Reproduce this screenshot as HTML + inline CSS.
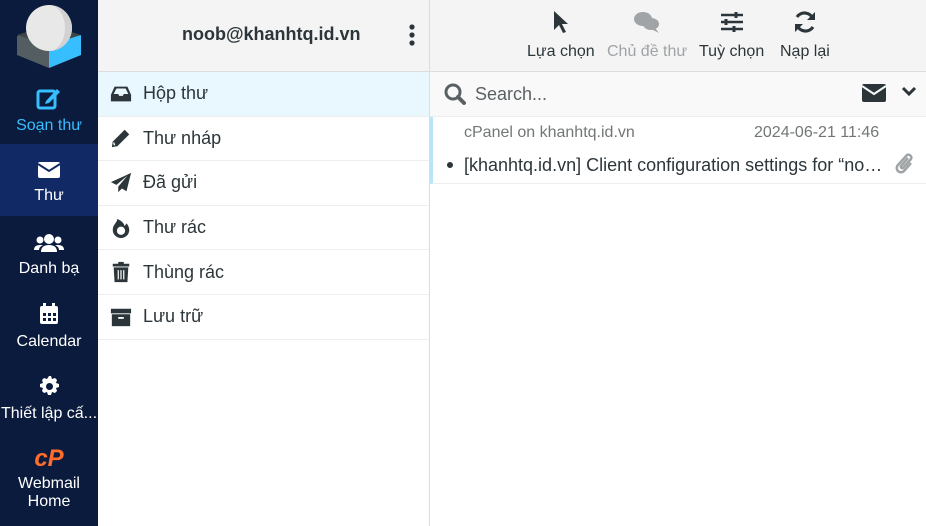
<!DOCTYPE html>
<html><head><meta charset="utf-8"><style>
*{margin:0;padding:0;box-sizing:border-box}
body{width:926px;height:526px;overflow:hidden;font-family:"Liberation Sans",sans-serif;background:#fff;position:relative;color:#2c363a}
#side{position:absolute;left:0;top:0;width:98px;height:526px;background:#0b1b3d}
.nav{position:absolute;left:0;width:98px;text-align:center;color:#fff;font-size:16px}
.nav svg{display:block;margin:0 auto 7px}
#fold{position:absolute;left:98px;top:0;width:332px;height:526px;border-right:1px solid #ddd}
.hd{height:72px;background:#f4f4f4;border-bottom:1px solid #ddd;position:relative}
.fi{height:44.6px;border-bottom:1px solid #eee;display:flex;align-items:center;font-size:18px;padding-left:12px}
.fi svg{width:22px;height:22px;margin-right:11px}
#main{position:absolute;left:430px;top:0;width:496px;height:526px}
.tb{position:absolute;top:10px;text-align:center;font-size:16px}
.tb svg{display:block;margin:0 auto 9px}
</style></head><body>
<div id="side">
 <svg style="position:absolute;left:16px;top:4px" width="66" height="66" viewBox="0 0 66 66">
  <polygon points="1,32 33,21 65,32 65,51 33,64 1,51" fill="#545d61"/>
  <polygon points="33,37 65,31 65,51 33,64" fill="#37beff"/>
  <polygon points="1,31 33,21 65,31 33,41" fill="#3d4548"/>
  <circle cx="33" cy="24" r="23" fill="#e8e8e8"/>
  <path d="M33,1 A23,23 0 0 1 33,47 A16,23 0 0 0 33,1" fill="#d2d2d2"/>
 </svg>
 <div class="nav" style="top:86px;color:#37beff"><svg width="26" height="24" viewBox="0 0 26 24"><rect x="2" y="5" width="17" height="17" rx="2" fill="none" stroke="#37beff" stroke-width="3"/><path d="M10 15 L21 3 L24 6 L13 17 L9 18Z" fill="#37beff"/></svg>Soạn thư</div>
 <div style="position:absolute;top:144px;left:0;width:98px;height:72px;background:#112a66"></div>
 <div class="nav" style="top:160px"><svg width="24" height="20" viewBox="0 0 24 20"><rect x="1" y="2" width="22" height="16" rx="2" fill="#fff"/><path d="M1 4 L12 11 L23 4" fill="none" stroke="#112a66" stroke-width="2"/></svg>Thư</div>
 <div class="nav" style="top:233px"><svg width="30" height="20" viewBox="0 0 30 20"><circle cx="15" cy="6" r="5" fill="#fff"/><circle cx="6" cy="7" r="3.5" fill="#fff"/><circle cx="24" cy="7" r="3.5" fill="#fff"/><path d="M7 19 Q7 12 15 12 Q23 12 23 19Z M0 17 Q0 12 6 12 L9 12 Q5 14 5 17Z M30 17 Q30 12 24 12 L21 12 Q25 14 25 17Z" fill="#fff"/></svg>Danh bạ</div>
 <div class="nav" style="top:302px"><svg width="22" height="24" viewBox="0 0 22 24"><rect x="2" y="4" width="18" height="18" rx="2" fill="#fff"/><rect x="5" y="1" width="3" height="5" fill="#fff"/><rect x="14" y="1" width="3" height="5" fill="#fff"/><g fill="#0b1b3d"><rect x="5" y="11" width="3" height="3"/><rect x="10" y="11" width="3" height="3"/><rect x="15" y="11" width="3" height="3"/><rect x="5" y="16" width="3" height="3"/><rect x="10" y="16" width="3" height="3"/><rect x="15" y="16" width="3" height="3"/></g></svg>Calendar</div>
 <div class="nav" style="top:374px;white-space:nowrap;font-size:16px"><svg width="24" height="24" viewBox="0 0 24 24"><path d="M12 2l2 0 1 3 3-1 2 2-1 3 3 1v3l-3 1 1 3-2 2-3-1-1 3h-3l-1-3-3 1-2-2 1-3-3-1v-3l3-1-1-3 2-2 3 1z" fill="#fff"/><circle cx="12.5" cy="12.5" r="3.5" fill="#0b1b3d"/></svg>Thiết lập cấ...</div>
 <div class="nav" style="top:446px;line-height:18px"><div style="color:#ff6c2c;font-weight:bold;font-style:italic;font-size:24px;line-height:26px;margin-bottom:3px">cP</div>Webmail<br>Home</div>
</div>
<div id="fold">
 <div class="hd"><div style="position:absolute;left:84px;top:24px;font-size:18px;font-weight:bold;color:#2c363a">noob@khanhtq.id.vn</div>
 <svg style="position:absolute;left:310px;top:24px" width="8" height="24"><circle cx="4" cy="3" r="2.6" fill="#2c363a"/><circle cx="4" cy="11" r="2.6" fill="#2c363a"/><circle cx="4" cy="19" r="2.6" fill="#2c363a"/></svg></div>
 <div class="fi" style="background:#e9f7ff"><svg viewBox="0 0 24 24"><path d="M5 4h14l4 9v7H1v-7z" fill="#2c363a"/><path d="M4 12l3-6h10l3 6h-5l-1 2h-4l-1-2z" fill="#e9f7ff"/></svg>Hộp thư</div>
 <div class="fi"><svg viewBox="0 0 24 24"><path d="M2 22l1-6L16 3l5 5L8 21z" fill="#2c363a"/><path d="M4 17l1 3" stroke="#fff" stroke-width="1.5"/></svg>Thư nháp</div>
 <div class="fi"><svg viewBox="0 0 24 24"><path d="M23 1L1 11l6 3 12-10-10 12v6l4-4 5 3z" fill="#2c363a"/></svg>Đã gửi</div>
 <div class="fi"><svg viewBox="0 0 24 24"><path d="M8 2c0 4-5 6-5 12a9 9 0 0 0 18 0c0-4-3-7-3-7l-2 3c-1-4-4-6-8-8z" fill="#2c363a"/><circle cx="12" cy="15" r="4.5" fill="#fff"/></svg>Thư rác</div>
 <div class="fi"><svg viewBox="0 0 24 24"><rect x="3" y="3" width="18" height="3" fill="#2c363a"/><rect x="9" y="1" width="6" height="3" fill="#2c363a"/><path d="M4 7h16l-1 16H5z" fill="#2c363a"/><path d="M9 10v10M12 10v10M15 10v10" stroke="#fff" stroke-width="1.3"/></svg>Thùng rác</div>
 <div class="fi"><svg viewBox="0 0 24 24"><rect x="1" y="3" width="22" height="5" fill="#2c363a"/><rect x="2" y="9" width="20" height="13" fill="#2c363a"/><rect x="9" y="12" width="6" height="2" fill="#fff"/></svg>Lưu trữ</div>
</div>
<div id="main">
 <div class="hd" style="height:72px">
  <div class="tb" style="left:97px"><svg width="16" height="24" viewBox="0 0 16 24"><path d="M1 1v19l5-5 4 8 3-1-4-8h6z" fill="#2c363a"/></svg>Lựa chọn</div>
  <div class="tb" style="left:177px;color:#a0a4a6"><svg width="28" height="24" viewBox="0 0 28 24"><ellipse cx="10" cy="9" rx="9" ry="7" fill="#a0a4a6"/><ellipse cx="18" cy="14" rx="8" ry="6" fill="#a0a4a6"/><path d="M22 18l4 5-8-4z" fill="#a0a4a6"/></svg>Chủ đề thư</div>
  <div class="tb" style="left:269px"><svg width="24" height="24" viewBox="0 0 24 24"><g stroke="#2c363a" stroke-width="2.5"><path d="M1 5h22M1 12h22M1 19h22"/><path d="M16 2v6M6 9v6M14 16v6" stroke-width="3"/></g></svg>Tuỳ chọn</div>
  <div class="tb" style="left:350px"><svg width="24" height="24" viewBox="0 0 24 24"><path d="M20 9A9 9 0 0 0 4 7M4 15a9 9 0 0 0 16 2" fill="none" stroke="#2c363a" stroke-width="3.2"/><path d="M22 2v8h-8zM2 22v-8h8z" fill="#2c363a"/></svg>Nạp lại</div>
 </div>
 <div style="position:absolute;top:72px;left:0;width:496px;height:45px;background:#f9f9f9;border-bottom:1px solid #eee">
  <svg style="position:absolute;left:13px;top:10px" width="24" height="24" viewBox="0 0 24 24"><circle cx="10" cy="10" r="7" fill="none" stroke="#5a6164" stroke-width="3"/><path d="M15 15l6 6" stroke="#5a6164" stroke-width="4" stroke-linecap="round"/></svg>
  <div style="position:absolute;left:45px;top:12px;font-size:18px;color:#5a6164">Search...</div>
  <svg style="position:absolute;left:432px;top:12px" width="24" height="18" viewBox="0 0 24 18"><rect x="0" y="0" width="24" height="18" rx="2" fill="#2c363a"/><path d="M0 2l12 8 12-8" fill="none" stroke="#f9f9f9" stroke-width="2"/></svg>
  <svg style="position:absolute;left:471px;top:14px" width="16" height="12" viewBox="0 0 16 12"><path d="M2 2l6 6 6-6" fill="none" stroke="#2c363a" stroke-width="3"/></svg>
 </div>
 <div style="position:absolute;top:117px;left:0;width:496px;height:67px;border-left:3px solid #b7e4f8;border-bottom:1px solid #eee">
  <div style="position:absolute;left:31px;top:7px;font-size:16px;color:#737677">cPanel on khanhtq.id.vn</div>
  <div style="position:absolute;left:321px;top:7px;font-size:16px;color:#737677">2024-06-21 11:46</div>
  <div style="position:absolute;left:14px;top:45px;width:6px;height:6px;border-radius:3px;background:#2c363a"></div>
  <div style="position:absolute;left:31px;top:38px;font-size:18px;color:#2c363a;white-space:nowrap">[khanhtq.id.vn] Client configuration settings for “no…</div>
  <svg style="position:absolute;left:461px;top:34px" width="22" height="26" viewBox="0 0 22 26"><path d="M17 12l-7 8a4 4 0 0 1-6-6l9-10a3 3 0 0 1 4 4l-8 9a1.5 1.5 0 0 1-2-2l7-8" fill="none" stroke="#a0a4a6" stroke-width="2.5"/></svg>
 </div>
</div>
</body></html>
